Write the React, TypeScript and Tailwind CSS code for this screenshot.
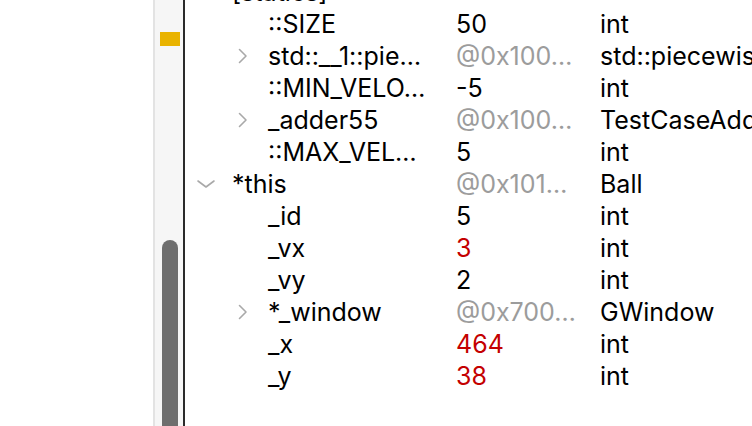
import React from 'react'

type Row = {
  name: string
  value: string
  type: string
  level: number
  chevron?: 'right' | 'down'
  tone?: 'plain' | 'muted' | 'changed'
}

const ROWS: Row[] = [
  { name: '[statics]', value: '', type: '', level: 1, chevron: 'down' },
  { name: '::SIZE', value: '50', type: 'int', level: 2 },
  { name: 'std::__1::pie…', value: '@0x100…', type: 'std::piecewise_construct_t', level: 2, chevron: 'right', tone: 'muted' },
  { name: '::MIN_VELO…', value: '-5', type: 'int', level: 2 },
  { name: '_adder55', value: '@0x100…', type: 'TestCaseAdder', level: 2, chevron: 'right', tone: 'muted' },
  { name: '::MAX_VEL…', value: '5', type: 'int', level: 2 },
  { name: '*this', value: '@0x101…', type: 'Ball', level: 1, chevron: 'down', tone: 'muted' },
  { name: '_id', value: '5', type: 'int', level: 2 },
  { name: '_vx', value: '3', type: 'int', level: 2, tone: 'changed' },
  { name: '_vy', value: '2', type: 'int', level: 2 },
  { name: '*_window', value: '@0x700…', type: 'GWindow', level: 2, chevron: 'right', tone: 'muted' },
  { name: '_x', value: '464', type: 'int', level: 2, tone: 'changed' },
  { name: '_y', value: '38', type: 'int', level: 2, tone: 'changed' },
]

function Chevron({ dir }: { dir: 'right' | 'down' }) {
  return (
    <svg width="20" height="20" viewBox="0 0 20 20" fill="none" stroke="#a9a9a9" strokeWidth="1.6" strokeLinecap="round" strokeLinejoin="round">
      {dir === 'right' ? <path d="M7.5 3.5 L14 10 L7.5 16.5" /> : <path d="M2 7 L10 13 L18 7" />}
    </svg>
  )
}

function VarRow({ row }: { row: Row }) {
  const valueColor =
    row.tone === 'muted' ? 'text-[#9c9c9c]' : row.tone === 'changed' ? 'text-[#c40000]' : 'text-black'
  return (
    <div className="flex h-[32px] items-center whitespace-nowrap">
      <div className="flex w-[271px] shrink-0 items-center pl-[11px]">
        {row.level === 2 && <div className="w-[36px] shrink-0" />}
        <div className="flex w-[36px] shrink-0 items-center">
          {row.chevron && <Chevron dir={row.chevron} />}
        </div>
        <span className="text-black">{row.name}</span>
      </div>
      <div className={`w-[144px] shrink-0 ${valueColor}`}>{row.value}</div>
      <div className="text-black">{row.type}</div>
    </div>
  )
}

export default function App() {
  return (
    <div
      className="flex h-[426px] w-[752px] overflow-hidden bg-white text-[25px] leading-[32px]"
      style={{ fontFamily: 'Inter, "Liberation Sans", sans-serif' }}
    >
      {/* blank pane on the left */}
      <div className="w-[153px] shrink-0 bg-white" />

      {/* gutter with scroll marker and scrollbar */}
      <div className="relative w-[32px] shrink-0 border-l-2 border-r-2 border-l-[#e3e3e3] border-r-[#2b2b2b] bg-[#f6f6f6]">
        <div className="absolute left-[5px] top-[32px] h-[14px] w-[20px] bg-[#e9b300]" />
        <div className="absolute left-[7px] top-[240px] h-[220px] w-[16px] rounded-t-full bg-[#6e6e6e]" />
      </div>

      {/* variables tree */}
      <div className="flex-1 overflow-hidden">
        <div className="mt-[-24px]">
          {ROWS.map((row, i) => (
            <VarRow key={i} row={row} />
          ))}
        </div>
      </div>
    </div>
  )
}
